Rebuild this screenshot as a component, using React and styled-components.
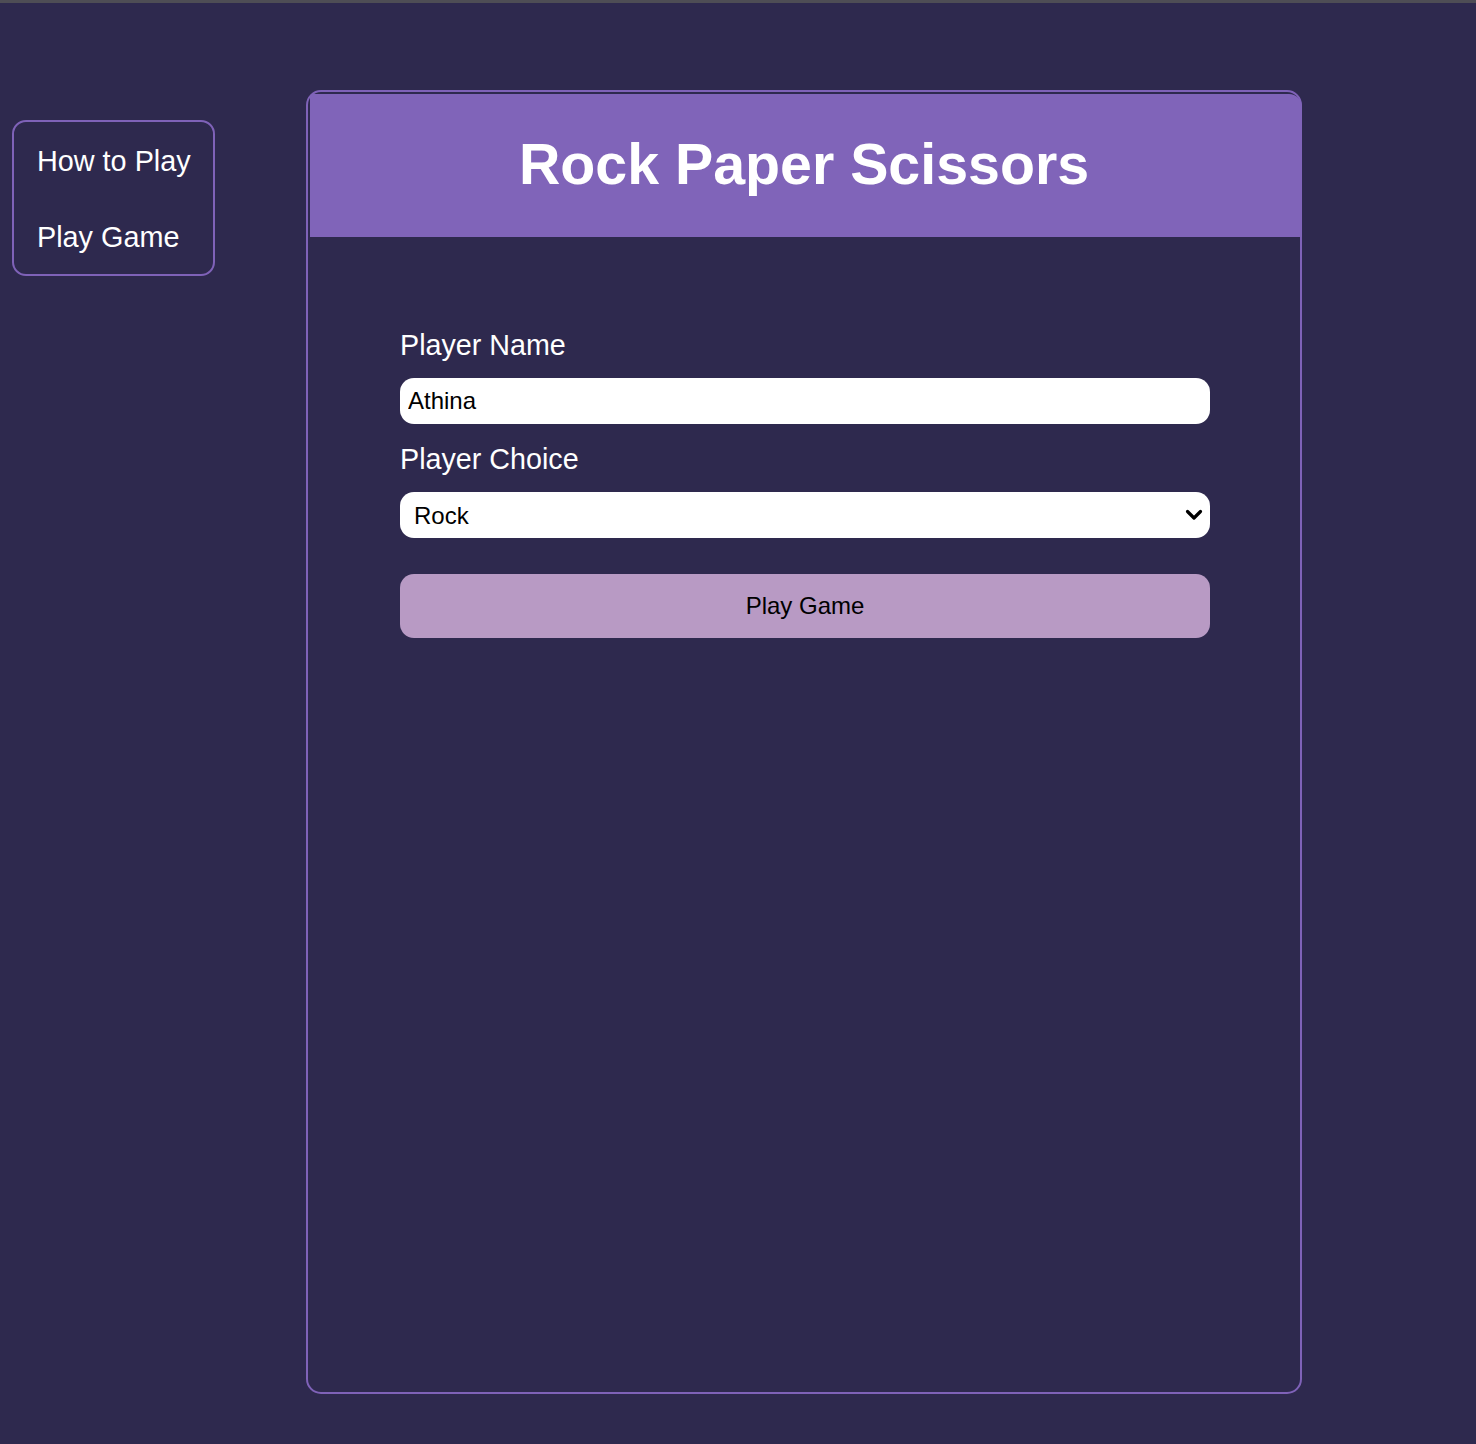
import React, { useState } from "react";
import styled, { createGlobalStyle } from "styled-components";

const GlobalStyle = createGlobalStyle`
  html, body {
    margin: 0;
    padding: 0;
    background: #2e294e;
  }
  body {
    font-family: "Liberation Sans", Arial, Helvetica, sans-serif;
    min-height: 1444px;
  }
  * { box-sizing: border-box; }
`;

const TopLine = styled.div`
  height: 3px;
  background: #4e4d55;
`;

const Page = styled.div`
  display: flex;
  align-items: flex-start;
  padding: 87px 0 0 12px;
  min-height: 1441px;
`;

const Nav = styled.nav`
  flex: none;
  width: 203px;
  margin-top: 30px;
  border: 2px solid #7f62b8;
  border-radius: 14px;
  padding: 23px 0 21px 23px;
  display: flex;
  flex-direction: column;
  gap: 44px;
`;

const NavLink = styled.a`
  display: block;
  color: #ffffff;
  font-size: 28.8px;
  line-height: 32px;
  text-decoration: none;
  cursor: pointer;
  white-space: nowrap;
`;

const Card = styled.main`
  flex: none;
  margin-left: 91px;
  width: 996px;
  height: 1304px;
  border: 2px solid #7f62b8;
  border-radius: 15px;
  padding: 2px 0 0 2px;
`;

const Header = styled.header`
  height: 143px;
  margin-right: -2px;
  background: #8064b9;
  border-radius: 3px 13px 0 0;
  display: flex;
  align-items: center;
  justify-content: center;
`;

const Title = styled.h1`
  margin: 0;
  color: #ffffff;
  font-size: 57.3px;
  font-weight: 700;
  line-height: 1;
  padding-right: 4px;
  padding-bottom: 2px;
`;

const Form = styled.form`
  width: 810px;
  margin: 92px auto 0;
  display: flex;
  flex-direction: column;
`;

const Label = styled.label`
  display: block;
  color: #ffffff;
  font-size: 28.7px;
  line-height: 32px;
  margin-bottom: 17px;
`;

const TextInput = styled.input`
  width: 100%;
  height: 46px;
  border: none;
  border-radius: 14px;
  background: #ffffff;
  font-family: inherit;
  font-size: 24px;
  color: #000;
  padding: 0 8px;
  margin-bottom: 19px;
  outline: none;
`;

const SelectWrap = styled.div`
  position: relative;
  width: 100%;
  height: 46px;
  margin-bottom: 36px;
`;

const Select = styled.select`
  appearance: none;
  -webkit-appearance: none;
  width: 100%;
  height: 46px;
  border: none;
  border-radius: 14px;
  background: #ffffff;
  font-family: inherit;
  font-size: 24px;
  color: #000;
  padding: 0 40px 0 14px;
  outline: none;
`;

const Chevron = styled.svg`
  position: absolute;
  right: 7px;
  top: 16px;
  pointer-events: none;
`;

const PlayButton = styled.button`
  width: 100%;
  height: 64px;
  border: none;
  border-radius: 14px;
  background: #b89ac4;
  color: #000;
  font-family: inherit;
  font-size: 24px;
  cursor: pointer;
`;

export default function App() {
  const [name, setName] = useState("Athina");
  const [choice, setChoice] = useState("Rock");
  return (
    <>
      <GlobalStyle />
      <TopLine />
      <Page>
        <Nav>
          <NavLink>How to Play</NavLink>
          <NavLink>Play Game</NavLink>
        </Nav>
        <Card>
          <Header>
            <Title>Rock Paper Scissors</Title>
          </Header>
          <Form onSubmit={(e) => e.preventDefault()}>
            <Label htmlFor="name">Player Name</Label>
            <TextInput
              id="name"
              value={name}
              onChange={(e) => setName(e.target.value)}
            />
            <Label htmlFor="choice">Player Choice</Label>
            <SelectWrap>
              <Select
                id="choice"
                value={choice}
                onChange={(e) => setChoice(e.target.value)}
              >
                <option>Rock</option>
                <option>Paper</option>
                <option>Scissors</option>
              </Select>
              <Chevron width="18" height="14" viewBox="0 0 18 14">
                <path
                  d="M2.5 3.5 L9 10 L15.5 3.5"
                  fill="none"
                  stroke="#000"
                  strokeWidth="3.2"
                  strokeLinecap="round"
                  strokeLinejoin="round"
                />
              </Chevron>
            </SelectWrap>
            <PlayButton type="submit">Play Game</PlayButton>
          </Form>
        </Card>
      </Page>
    </>
  );
}
